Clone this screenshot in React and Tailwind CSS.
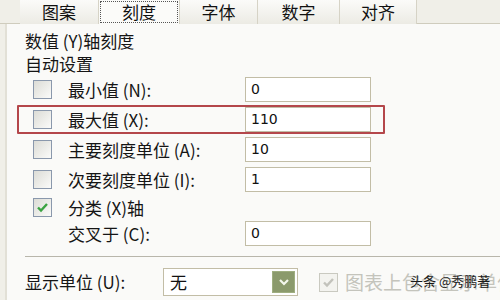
import React from "react";

const font = { fontFamily: '"Noto Sans CJK SC", "Noto Sans", sans-serif' };

function Box({ checked, disabled }) {
  return (
    <div
      className={`shrink-0 w-[19px] h-[19px] border flex items-center justify-center ${
        disabled
          ? "border-[#c9c9c0] bg-[#f3f3ef]"
          : "border-[#8a98ac] bg-gradient-to-br from-[#dcdcd6] to-[#fbfbf9]"
      }`}
    >
      {checked && (
        <svg width="13" height="13" viewBox="0 0 13 13">
          <path
            d="M2 6.5 L5 9.5 L11 3"
            fill="none"
            stroke={disabled ? "#c2c2bb" : "#3aa341"}
            strokeWidth="2.4"
          />
        </svg>
      )}
    </div>
  );
}

function Input({ value }) {
  return (
    <div className="shrink-0 w-[126px] h-[25px] border border-[#c2bda6] bg-white flex items-center pl-[5px] text-[14px] text-[#111]" style={{ fontFamily: '"DejaVu Sans", sans-serif' }}>
      {value}
    </div>
  );
}

function Row({ h, label, value, checked, noBox }) {
  return (
    <div className={`flex items-center ${h}`}>
      <div className="shrink-0 w-[8px]" />
      {noBox ? <div className="shrink-0 w-[19px]" /> : <Box checked={checked} />}
      <div className="shrink-0 w-[16px]" />
      <div className="shrink-0 w-[177px] text-[17px] text-[#151515] leading-none whitespace-nowrap">{label}</div>
      {value !== undefined && <Input value={value} />}
    </div>
  );
}

function Tab({ label, selected, w }) {
  return (
    <div className={`shrink-0 ${w} h-[24px] flex items-center justify-center border-r border-[#d6d3c6] ${selected ? "bg-[#fbfbf9]" : "bg-gradient-to-b from-[#fbfbf9] to-[#ecebe4]"}`}>
      <div className={`px-[9px] h-[22px] flex items-center text-[17px] text-[#111] ${selected ? "border border-dotted border-[#555] w-[78px] justify-center" : ""}`}>
        {label}
      </div>
    </div>
  );
}

export default function App() {
  return (
    <div className="w-[500px] h-[300px] overflow-hidden bg-[#f0efe8] relative" style={font}>
      <div className="flex h-[24px] pl-[20px] border-b border-[#cfccbd]">
        <Tab label="图案" w="w-[79px]" />
        <Tab label="刻度" w="w-[81px]" selected />
        <Tab label="字体" w="w-[78px]" />
        <Tab label="数字" w="w-[82px]" />
        <Tab label="对齐" w="w-[77px]" />
      </div>
      <div className="ml-[5px] h-[276px] border-l-2 border-[#e2e0d6] bg-[#fafaf8] pl-[18px] pr-[4px]">
        <div className="h-[7px]" />
        <div className="h-[20px] flex items-center text-[17px] text-[#151515] whitespace-nowrap">数值 (Y)轴刻度</div>
        <div className="h-[3px]" />
        <div className="h-[20px] flex items-center text-[17px] text-[#151515]">自动设置</div>
        <Row h="h-[30px]" label="最小值 (N):" value="0" />
        <Row h="h-[30px]" label="最大值 (X):" value="110" />
        <Row h="h-[30px]" label="主要刻度单位 (A):" value="10" />
        <Row h="h-[30px]" label="次要刻度单位 (I):" value="1" />
        <Row h="h-[26px]" label="分类 (X)轴" checked />
        <Row h="h-[27px]" label="交叉于 (C):" value="0" noBox />
        <div className="h-[9px]" />
        <div className="h-px bg-[#b8b6ab] mr-[-10px]" />
        <div className="h-[11px]" />
        <div className="flex items-center h-[28px]">
          <div className="shrink-0 w-[138px] text-[17px] text-[#151515] whitespace-nowrap">显示单位 (U):</div>
          <div className="shrink-0 w-[135px] h-[28px] border border-[#c2bda6] bg-white flex items-center justify-between pl-[6px] pr-[2px]">
            <span className="text-[17px] text-[#111]">无</span>
            <div className="w-[23px] h-[22px] bg-[#8b9a6c] border border-[#9fae80] flex items-center justify-center">
              <svg width="12" height="10" viewBox="0 0 12 10">
                <path d="M2 3 L6 7 L10 3" fill="none" stroke="#f4f7ec" strokeWidth="2.2" />
              </svg>
            </div>
          </div>
          <div className="shrink-0 w-[21px]" />
          <Box checked disabled />
          <div className="shrink-0 ml-[7px] text-[19px] text-[#c4c4bc] whitespace-nowrap">图表上包含显示单位</div>
        </div>
      </div>
      <div className="absolute left-[17px] top-[105px] w-[368px] h-[29px] border-2 border-[#b4474b] rounded-[1px]" />
      <div className="absolute left-[410px] top-[271px] text-[13px] text-[#1a1a1a] whitespace-nowrap">头条 @秀鹏著</div>
    </div>
  );
}
